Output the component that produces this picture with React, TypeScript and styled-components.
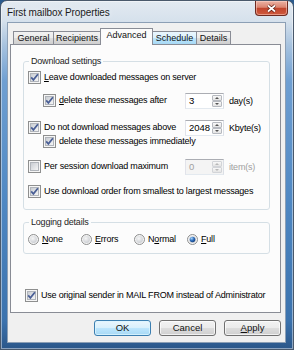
import styled, { createGlobalStyle, css } from 'styled-components';

const UI_FONT = `"Liberation Sans", Arial, sans-serif`;

const GlobalStyle = createGlobalStyle`
  html, body {
    margin: 0;
    padding: 0;
    background: #2b5b8e;
  }
  #root {
    width: 294px;
    height: 350px;
  }
`;

const Window = styled.div`
  box-sizing: border-box;
  width: 294px;
  height: 350px;
  display: flex;
  flex-direction: column;
  padding: 0 7px 6px 6px;
  border: 1px solid #4a596b;
  border-radius: 7px 7px 0 0;
  background: linear-gradient(
    180deg,
    #e3eaf1 0px,
    #d6e1ec 20px,
    #a6c2df 45px,
    #6f9fd2 80px,
    #4f88c3 200px,
    #3b72ad 320px,
    #2a5587 350px
  );
  box-shadow: inset 0 0 0 1px rgba(255, 255, 255, 0.45);
  font-family: ${UI_FONT};
  font-size: 9px;
  letter-spacing: -0.2px;
  color: #000;
  overflow: hidden;
`;

const TitleBar = styled.div`
  height: 21px;
  display: flex;
  justify-content: space-between;
  align-items: flex-start;
`;

const Title = styled.div`
  font-size: 10px;
  letter-spacing: -0.1px;
  line-height: 23px;
  color: #1b1b1b;
  text-shadow: 0 0 6px rgba(255, 255, 255, 0.9);
  white-space: nowrap;
`;

const CloseButton = styled.div`
  box-sizing: border-box;
  width: 33px;
  height: 15px;
  margin-right: -2px;
  border: 1px solid #6e2a20;
  border-top: none;
  border-radius: 0 0 4px 4px;
  background: linear-gradient(180deg, #ebb3a4 0%, #db8470 45%, #c1452d 52%, #cf5a3d 100%);
  box-shadow: inset 0 0 0 1px rgba(255, 215, 205, 0.5);
  display: flex;
  align-items: center;
  justify-content: center;
`;

const Client = styled.div`
  flex: 1;
  display: flex;
  flex-direction: column;
  padding: 5px 4px 6px 2px;
  background: #f0f0f0;
  border: 1px solid #8c9fb5;
`;

const TabRow = styled.div`
  height: 16px;
  display: flex;
  align-items: flex-end;
  padding-left: 3px;
  position: relative;
  z-index: 1;
`;

const Tab = styled.div<{ $width: number; $active?: boolean; $hot?: boolean }>`
  box-sizing: border-box;
  width: ${(p) => p.$width}px;
  height: 13px;
  margin-right: -1px;
  border: 1px solid #898c95;
  border-bottom: none;
  background: linear-gradient(180deg, #f2f2f2 0%, #ebebeb 50%, #dddddd 50%, #cfcfcf 100%);
  font-size: 9px;
  letter-spacing: 0;
  line-height: 12px;
  text-align: center;
  white-space: nowrap;
  color: #111;
  ${(p) =>
    p.$hot &&
    css`
      background: linear-gradient(180deg, #eaf6fd 0%, #d9f0fc 50%, #bee6fd 50%, #a7d9f5 100%);
    `}
  ${(p) =>
    p.$active &&
    css`
      height: 17px;
      margin-bottom: -1px;
      background: #fcfcfc;
      line-height: 13px;
      position: relative;
      z-index: 2;
    `}
`;

const Panel = styled.div`
  box-sizing: border-box;
  height: 269px;
  border: 1px solid #898c95;
  background: #fcfcfc;
  display: flex;
  flex-direction: column;
`;

const Group = styled.fieldset<{ $top: number; $bottom: number; $padTop: number }>`
  margin: ${(p) => p.$top}px 10px 0 12px;
  padding: ${(p) => p.$padTop}px 2px ${(p) => p.$bottom}px 4px;
  border: 1px solid #d5dfe5;
  border-radius: 3px;
  min-width: 0;
`;

const Legend = styled.legend`
  margin-left: 1px;
  padding: 0 2px;
  line-height: 12px;
  color: #1e1e1e;
`;

const Row = styled.div<{ $gap?: number; $indent?: number }>`
  display: flex;
  align-items: center;
  height: 13px;
  margin-top: ${(p) => p.$gap ?? 0}px;
  padding-left: ${(p) => p.$indent ?? 0}px;
  white-space: nowrap;
`;

const Label = styled.span<{ $grow?: boolean }>`
  margin-left: 3px;
  line-height: 13px;
  ${(p) => p.$grow && 'flex: 1;'}
`;

const Key = styled.span`
  text-decoration: underline;
  text-underline-offset: 1px;
`;

const SpinBox = styled.div<{ $disabled?: boolean }>`
  box-sizing: border-box;
  width: 39px;
  height: 16px;
  flex-shrink: 0;
  display: flex;
  border: 1px solid;
  border-color: #abadb3 #dbdfe6 #e3e9ef #e2e3ea;
  background: ${(p) => (p.$disabled ? '#f4f4f4' : '#fff')};
  color: ${(p) => (p.$disabled ? '#a0a0a0' : '#000')};
`;

const SpinValue = styled.span`
  flex: 1;
  padding-left: 3px;
  font-size: 9.5px;
  letter-spacing: 0;
  line-height: 14px;
`;

const SpinButtons = styled.div`
  width: 10px;
  margin: 1px 1px 1px 0;
  display: flex;
  flex-direction: column;
`;

const SpinArrow = styled.div<{ $down?: boolean; $disabled?: boolean }>`
  flex: 1;
  box-sizing: border-box;
  border: 1px solid ${(p) => (p.$disabled ? '#d2d4d8' : '#b6b9bf')};
  border-radius: 1px;
  background: linear-gradient(180deg, #f8f8f8, #e4e4e4);
  display: flex;
  align-items: center;
  justify-content: center;
  &::after {
    content: '';
    border-left: 2px solid transparent;
    border-right: 2px solid transparent;
    ${(p) =>
      p.$down
        ? `border-top: 2px solid ${p.$disabled ? '#b8b8b8' : '#555'};`
        : `border-bottom: 2px solid ${p.$disabled ? '#b8b8b8' : '#555'};`}
  }
`;

const Unit = styled.span<{ $disabled?: boolean }>`
  width: 38px;
  margin-left: 5px;
  color: ${(p) => (p.$disabled ? '#a0a0a0' : '#000')};
`;

const RadioGrid = styled.div`
  display: grid;
  grid-template-columns: repeat(4, 53px);
  height: 13px;
`;

const RadioItem = styled.div`
  display: flex;
  align-items: center;
  white-space: nowrap;
`;

const BottomRow = styled(Row)`
  margin-left: 14px;
`;

const ButtonRow = styled.div`
  display: flex;
  justify-content: flex-end;
  gap: 8px;
  margin-top: 7px;
`;

const Button = styled.div<{ $default?: boolean }>`
  box-sizing: border-box;
  width: 57px;
  height: 16px;
  border: 1px solid #707070;
  border-radius: 3px;
  background: linear-gradient(180deg, #f2f2f2 0%, #ebebeb 50%, #dddddd 50%, #cfcfcf 100%);
  box-shadow: inset 0 0 0 1px rgba(255, 255, 255, 0.7);
  font-size: 9.5px;
  letter-spacing: 0;
  line-height: 14px;
  text-align: center;
  color: #111;
  ${(p) =>
    p.$default &&
    css`
      border-color: #3c7fb1;
      background: linear-gradient(180deg, #eaf6fd 0%, #d9f0fc 50%, #bee6fd 50%, #a7d9f5 100%);
      box-shadow: inset 0 0 0 1px rgba(220, 245, 255, 0.8);
    `}
`;

const Svg = styled.svg`
  flex-shrink: 0;
  display: block;
`;

function CheckBox({ checked }: { checked?: boolean }) {
  return (
    <Svg width="13" height="13" viewBox="0 0 13 13">
      <defs>
        <linearGradient id="cbInner" x1="0" y1="0" x2="1" y2="1">
          <stop offset="0" stopColor="#c6cad0" />
          <stop offset="1" stopColor="#f8f8f8" />
        </linearGradient>
      </defs>
      <rect x="0.5" y="0.5" width="12" height="12" fill="#f6f6f6" stroke="#8e8f8f" />
      <rect x="2.5" y="2.5" width="8" height="8" fill="url(#cbInner)" stroke="#b1b5bb" />
      {checked && (
        <path d="M3.2 6.4 L5.4 8.9 L9.9 3.3" fill="none" stroke="#4a5f96" strokeWidth="1.7" />
      )}
    </Svg>
  );
}

function Radio({ selected }: { selected?: boolean }) {
  return (
    <Svg width="11" height="11" viewBox="0 0 11 11">
      <defs>
        <radialGradient id="rbInner" cx="0.4" cy="0.35" r="0.7">
          <stop offset="0" stopColor="#f6f6f6" />
          <stop offset="1" stopColor="#c9ccd1" />
        </radialGradient>
        <radialGradient id="rbDot" cx="0.35" cy="0.3" r="0.75">
          <stop offset="0" stopColor="#a9d6fb" />
          <stop offset="0.55" stopColor="#2f6dbb" />
          <stop offset="1" stopColor="#163f7c" />
        </radialGradient>
      </defs>
      <circle cx="5.5" cy="5.5" r="5" fill="#f4f4f4" stroke="#8e8f8f" />
      <circle cx="5.5" cy="5.5" r="3.4" fill="url(#rbInner)" />
      {selected && <circle cx="5.5" cy="5.5" r="2.8" fill="url(#rbDot)" />}
    </Svg>
  );
}

function Spinner({ value, disabled }: { value: string; disabled?: boolean }) {
  return (
    <SpinBox $disabled={disabled}>
      <SpinValue>{value}</SpinValue>
      <SpinButtons>
        <SpinArrow $disabled={disabled} />
        <SpinArrow $down $disabled={disabled} />
      </SpinButtons>
    </SpinBox>
  );
}

export default function App() {
  return (
    <>
      <GlobalStyle />
      <Window>
        <TitleBar>
          <Title>First mailbox Properties</Title>
          <CloseButton>
            <svg width="11" height="9" viewBox="0 0 11 9">
              <path d="M2 1.5 L9 7.5 M9 1.5 L2 7.5" stroke="#5a1e14" strokeWidth="3.2" />
              <path d="M2 1.5 L9 7.5 M9 1.5 L2 7.5" stroke="#ffffff" strokeWidth="1.7" />
            </svg>
          </CloseButton>
        </TitleBar>

        <Client>
          <TabRow>
            <Tab $width={41}>General</Tab>
            <Tab $width={48}>Recipients</Tab>
            <Tab $width={53} $active>
              Advanced
            </Tab>
            <Tab $width={45} $hot>
              Schedule
            </Tab>
            <Tab $width={35}>Details</Tab>
          </TabRow>

          <Panel>
            <Group $top={10} $padTop={4} $bottom={11}>
              <Legend>Download settings</Legend>
              <Row>
                <CheckBox checked />
                <Label>
                  <Key>L</Key>eave downloaded messages on server
                </Label>
              </Row>
              <Row $gap={10} $indent={15}>
                <CheckBox checked />
                <Label $grow>
                  <Key>d</Key>elete these messages after
                </Label>
                <Spinner value="3" />
                <Unit>day(s)</Unit>
              </Row>
              <Row $gap={14}>
                <CheckBox checked />
                <Label $grow>Do not download messages above</Label>
                <Spinner value="2048" />
                <Unit>Kbyte(s)</Unit>
              </Row>
              <Row $gap={1} $indent={15}>
                <CheckBox checked />
                <Label>delete these messages immediately</Label>
              </Row>
              <Row $gap={12}>
                <CheckBox />
                <Label $grow>Per session download maximum</Label>
                <Spinner value="0" disabled />
                <Unit $disabled>item(s)</Unit>
              </Row>
              <Row $gap={12}>
                <CheckBox checked />
                <Label>Use download order from smallest to largest messages</Label>
              </Row>
            </Group>

            <Group $top={6} $padTop={5} $bottom={7}>
              <Legend>Logging details</Legend>
              <RadioGrid>
                <RadioItem>
                  <Radio />
                  <Label>
                    <Key>N</Key>one
                  </Label>
                </RadioItem>
                <RadioItem>
                  <Radio />
                  <Label>
                    <Key>E</Key>rrors
                  </Label>
                </RadioItem>
                <RadioItem>
                  <Radio />
                  <Label>
                    N<Key>o</Key>rmal
                  </Label>
                </RadioItem>
                <RadioItem>
                  <Radio selected />
                  <Label>
                    <Key>F</Key>ull
                  </Label>
                </RadioItem>
              </RadioGrid>
            </Group>

            <BottomRow $gap={35}>
              <CheckBox checked />
              <Label>Use original sender in MAIL FROM instead of Administrator</Label>
            </BottomRow>
          </Panel>

          <ButtonRow>
            <Button $default>OK</Button>
            <Button>Cancel</Button>
            <Button>
              <Key>A</Key>pply
            </Button>
          </ButtonRow>
        </Client>
      </Window>
    </>
  );
}
